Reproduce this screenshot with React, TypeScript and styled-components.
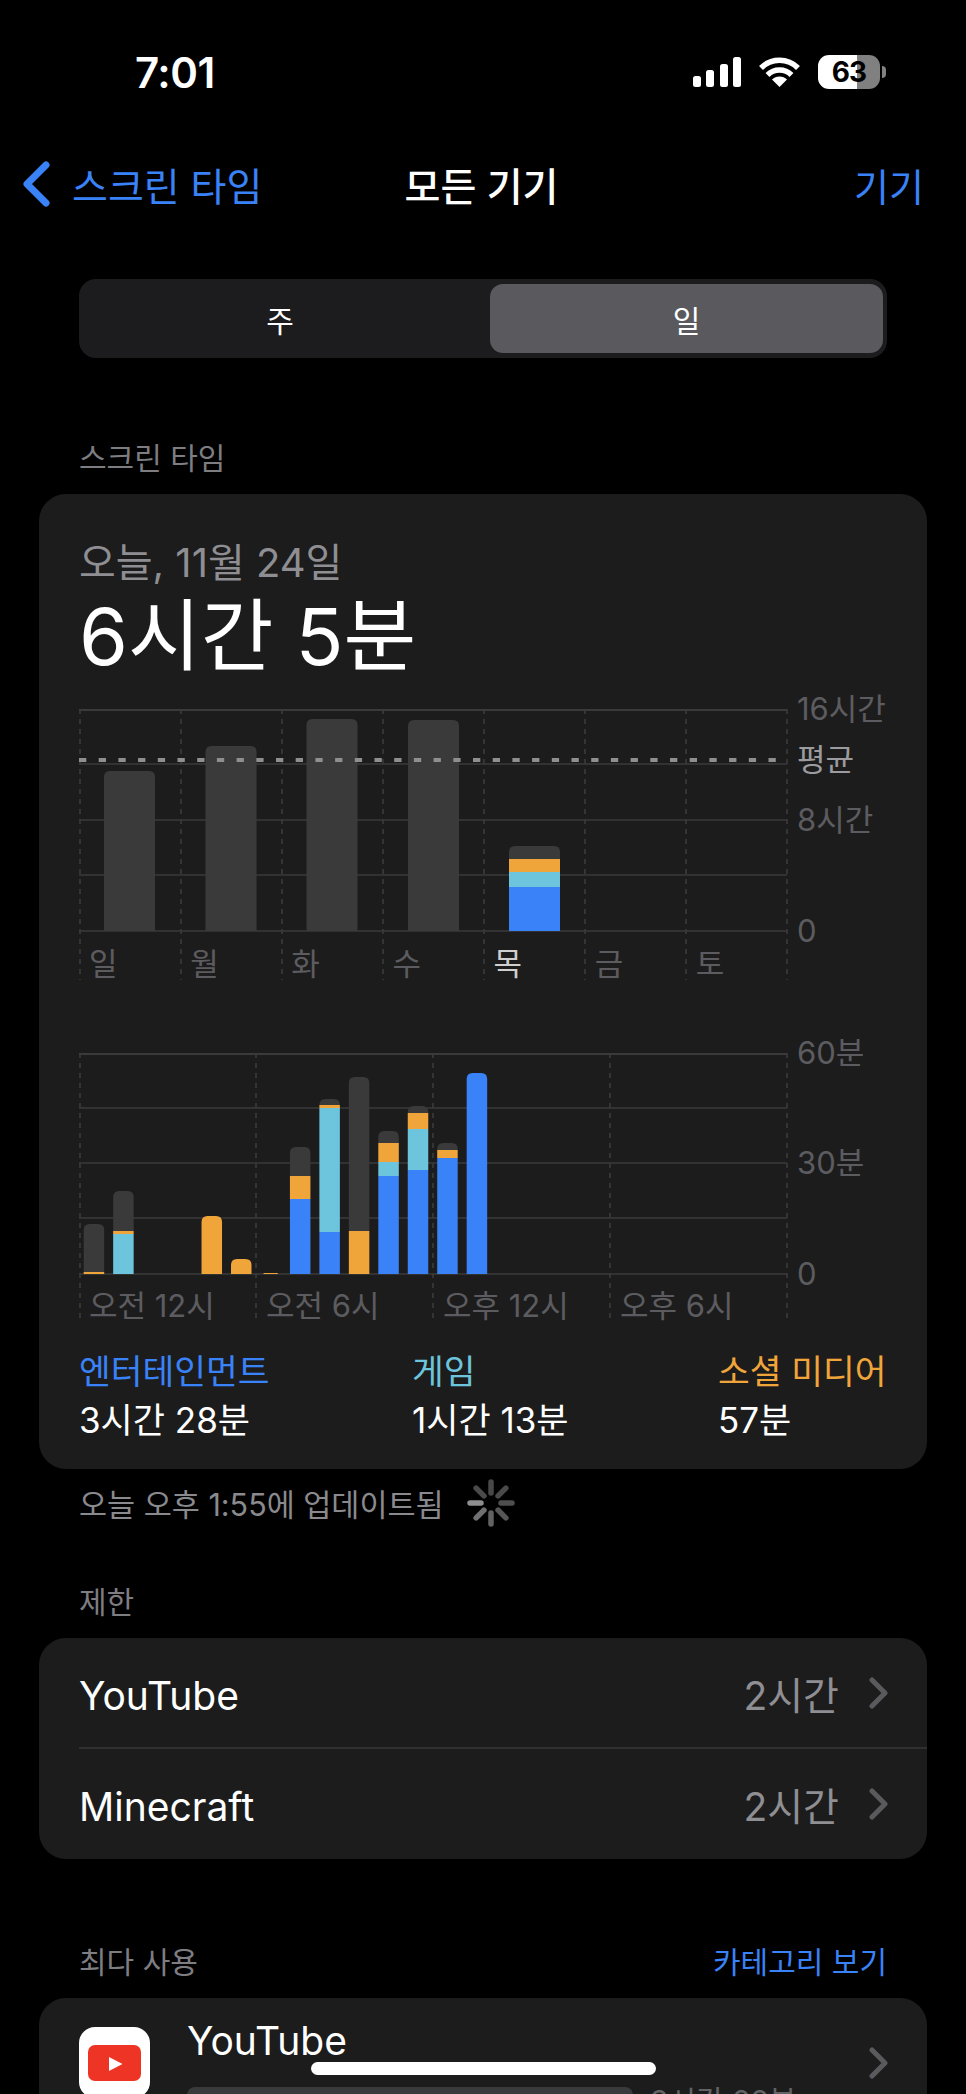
import React from "react";
import styled, { createGlobalStyle } from "styled-components";

const GlobalStyle = createGlobalStyle`
  html, body { margin: 0; padding: 0; background: #000; }
  body { width: 966px; height: 2094px; overflow: hidden; font-family: Inter, "Noto Sans CJK KR", sans-serif; color: #fff; }
  * { box-sizing: border-box; }
`;

const BLUE = "#3a82f7";
const CYAN = "#6cc5dd";
const ORANGE = "#f0a53b";
const GRAY = "#3a3a3a";

const Phone = styled.div`
  position: relative;
  width: 966px;
  height: 2094px;
  overflow: hidden;
  background: #000;
`;

const StatusBar = styled.div`
  height: 112px;
  padding: 32px 80px 0 135px;
  display: flex;
  align-items: center;
  justify-content: space-between;
`;
const Time = styled.div`
  font-size: 42px;
  font-weight: 600;
  letter-spacing: -0.5px;
`;
const StatusIcons = styled.div`
  display: flex;
  align-items: center;
  gap: 18px;
`;
const Signal = styled.div`
  display: flex;
  align-items: flex-end;
  gap: 5.3px;
  height: 30px;
`;
const SignalBar = styled.i<{ $h: number }>`
  display: block;
  width: 8px;
  height: ${(p) => p.$h}px;
  border-radius: 2.5px;
  background: #fff;
`;
const Battery = styled.div`
  position: relative;
  width: 62px;
  height: 34px;
  border-radius: 11px;
  background: linear-gradient(90deg, #fff 0 39px, #808080 39px);
  color: #000;
  font: 700 28px/34px Inter, sans-serif;
  letter-spacing: -1px;
  text-align: center;
  margin-right: 6px;
  &::after {
    content: "";
    position: absolute;
    right: -6px;
    top: 11px;
    width: 4px;
    height: 12px;
    border-radius: 0 5px 5px 0;
    background: #808080;
  }
`;

const Nav = styled.div`
  height: 144px;
  padding: 0 42px 0 23px;
  display: grid;
  grid-template-columns: 1fr auto 1fr;
  align-items: center;
`;
const BackLink = styled.div`
  display: flex;
  align-items: center;
  gap: 22px;
  color: ${BLUE};
  font-size: 39px;
`;
const NavTitle = styled.div`
  font-size: 39px;
  font-weight: 500;
  margin-left: 16px;
`;
const NavAction = styled.div`
  justify-self: end;
  font-size: 38px;
  color: ${BLUE};
`;

const Segmented = styled.div`
  margin: 23px 79px 0;
  height: 79px;
  padding: 5px 4px 5px 5px;
  border-radius: 17px;
  background: #1c1c1e;
  display: grid;
  grid-template-columns: 392px 1fr;
  gap: 14px;
`;
const Segment = styled.div<{ $on?: boolean }>`
  display: flex;
  align-items: center;
  justify-content: center;
  border-radius: 13px;
  font-size: 30px;
  background: ${(p) => (p.$on ? "#5a5a5e" : "transparent")};
`;

const SectionHead = styled.div<{ $top: number }>`
  margin: ${(p) => p.$top}px 79px 0;
  height: 44px;
  display: flex;
  align-items: center;
  justify-content: space-between;
  font-size: 30px;
  color: #7d7d82;
`;
const SectionLink = styled.span`
  color: ${BLUE};
`;

const Card = styled.section`
  margin: 16px 39px 0;
  border-radius: 27px;
  background: #1c1c1c;
`;
const ScreenCard = styled(Card)`
  height: 975px;
  padding: 44px 40px 0;
`;
const DateLine = styled.div`
  font-size: 40px;
  line-height: 50px;
  color: #8e8e93;
`;
const Total = styled.div`
  font-size: 79px;
  line-height: 100px;
  margin-top: -2px;
`;

const Chart = styled.div<{ $h: number; $top: number }>`
  position: relative;
  width: 808px;
  height: ${(p) => p.$h}px;
  margin-top: ${(p) => p.$top}px;
  & > svg {
    display: block;
  }
`;
const AxisLabel = styled.span<{ $y: number; $bright?: boolean }>`
  position: absolute;
  left: 718px;
  top: ${(p) => p.$y - 20}px;
  line-height: 40px;
  font-size: 31px;
  color: ${(p) => (p.$bright ? "#9c9ca0" : "#5c5c60")};
`;
const XLabels = styled.div<{ $cols: number }>`
  position: absolute;
  left: 0;
  bottom: 0;
  width: 708px;
  display: grid;
  grid-template-columns: repeat(${(p) => p.$cols}, 1fr);
`;
const XLabel = styled.span<{ $on?: boolean }>`
  padding-left: 10px;
  line-height: 32px;
  font-size: 31px;
  white-space: nowrap;
  color: ${(p) => (p.$on ? "#cfcfcf" : "#5c5c60")};
`;

const Legend = styled.div`
  margin-top: 26px;
  display: grid;
  grid-template-columns: 333px 306px 1fr;
  white-space: nowrap;
`;
const LegendName = styled.div<{ $c: string }>`
  font-size: 34.5px;
  line-height: 48px;
  color: ${(p) => p.$c};
`;
const LegendValue = styled.div`
  font-size: 35px;
  line-height: 48px;
`;

const Updated = styled.div`
  margin: 0 79px;
  height: 68px;
  display: flex;
  align-items: center;
  gap: 22px;
  font-size: 30.5px;
  color: #8a8a8e;
`;

const Row = styled.div`
  height: 109px;
  margin-left: 40px;
  padding-right: 39px;
  display: flex;
  align-items: center;
  justify-content: space-between;
  font-size: 39px;
  & + & {
    height: 112px;
    border-top: 2px solid #303032;
  }
`;
const RowLabel = styled.span`
  padding-top: 5px;
`;
const RowRight = styled.div`
  display: flex;
  align-items: center;
  gap: 30px;
  color: #8e8e93;
`;

const AppRow = styled.div`
  position: relative;
  height: 130px;
  padding: 29px 39px 0 40px;
  display: flex;
  gap: 37px;
`;
const AppIcon = styled.div`
  flex: none;
  width: 71px;
  height: 71px;
  border-radius: 16px;
  background: #fff;
  display: flex;
  align-items: center;
  justify-content: center;
`;
const AppBody = styled.div`
  flex: 1;
  font-size: 39px;
  line-height: 44px;
  margin-top: -8px;
`;
const AppMeter = styled.div`
  display: flex;
  align-items: flex-start;
  gap: 17px;
  margin-top: 18px;
  font-size: 30px;
  line-height: 40px;
  color: #636366;
`;
const MeterBar = styled.div`
  width: 446px;
  height: 30px;
  margin-top: 6px;
  border-radius: 8px;
  background: #3a3a3c;
`;
const AppChevron = styled.div`
  position: absolute;
  right: 39px;
  top: 49px;
`;

const HomeIndicator = styled.div`
  position: absolute;
  left: 311px;
  top: 2062px;
  width: 345px;
  height: 13px;
  border-radius: 7px;
  background: #fff;
`;

type Seg = [number, string];
type Bar = { x: number; w: number; segs: Seg[] };

function topPath(x: number, y: number, w: number, b: number, r: number) {
  const rr = Math.min(r, b - y);
  return `M${x} ${b}V${y + rr}Q${x} ${y} ${x + rr} ${y}H${x + w - rr}Q${x + w} ${y} ${x + w} ${y + rr}V${b}Z`;
}

function ChartPlot({
  height,
  hLines,
  vLines,
  bars,
  base,
  avg,
}: {
  height: number;
  hLines: number[];
  vLines: number[];
  bars: Bar[];
  base: number;
  avg?: number;
}) {
  return (
    <svg width={710} height={height} viewBox={`0 0 710 ${height}`}>
      {vLines.map((x) => (
        <line key={x} x1={x} x2={x} y1={0} y2={height} stroke="#3c3c3e" strokeWidth={1.5} strokeDasharray="5 5" />
      ))}
      {hLines.map((y, i) => (
        <line key={y} x1={0} x2={708} y1={y} y2={y} stroke="#3a3a3a" strokeWidth={i === 0 ? 2 : 1.5} />
      ))}
      {bars.map((b) => (
        <g key={b.x}>
          {b.segs.map(([top, c], i) => {
            const bottom = i + 1 < b.segs.length ? b.segs[i + 1][0] : base;
            return i === 0 ? (
              <path key={i} d={topPath(b.x, top, b.w, bottom, 6)} fill={c} />
            ) : (
              <rect key={i} x={b.x} y={top} width={b.w} height={bottom - top} fill={c} />
            );
          })}
        </g>
      ))}
      {avg !== undefined && (
        <line x1={0} x2={708} y1={avg} y2={avg} stroke="#8f8f92" strokeWidth={4} strokeDasharray="7.3 12.4" />
      )}
    </svg>
  );
}

const O1 = 709;
const weekBars: Bar[] = [
  { x: 25, w: 51, segs: [[771 - O1, GRAY]] },
  { x: 126.5, w: 51, segs: [[746 - O1, GRAY]] },
  { x: 227.5, w: 51, segs: [[719 - O1, GRAY]] },
  { x: 329, w: 51, segs: [[720 - O1, GRAY]] },
  {
    x: 430,
    w: 51,
    segs: [
      [846 - O1, GRAY],
      [859 - O1, ORANGE],
      [872 - O1, CYAN],
      [887 - O1, BLUE],
    ],
  },
];

const O2 = 1053;
const hourSegs: [number, [number, string][]][] = [
  [0, [[1224, GRAY], [1272, ORANGE]]],
  [1, [[1191, GRAY], [1231, ORANGE], [1234, CYAN]]],
  [4, [[1216, ORANGE]]],
  [5, [[1259, ORANGE]]],
  [7, [[1147, GRAY], [1176, ORANGE], [1199, BLUE]]],
  [8, [[1099, GRAY], [1105, ORANGE], [1108, CYAN], [1232, BLUE]]],
  [9, [[1077, GRAY], [1231, ORANGE]]],
  [10, [[1131, GRAY], [1143, ORANGE], [1162, CYAN], [1176, BLUE]]],
  [11, [[1106, GRAY], [1113, ORANGE], [1129, CYAN], [1170, BLUE]]],
  [12, [[1143, GRAY], [1150, ORANGE], [1158, BLUE]]],
  [13, [[1073, BLUE]]],
];
const hourBars: Bar[] = [
  ...hourSegs.map(([i, segs]) => ({
    x: 4.7 + i * 29.46,
    w: 20.5,
    segs: segs.map(([t, c]) => [t - O2, c] as Seg),
  })),
  { x: 184.3, w: 14.7, segs: [[1273 - O2, ORANGE]] },
];

const Chevron = ({ color = "#5a5a5e" }: { color?: string }) => (
  <svg width="19" height="32" viewBox="0 0 19 32" fill="none">
    <path d="M3 3 L16 16 L3 29" stroke={color} strokeWidth="5" strokeLinecap="round" strokeLinejoin="round" />
  </svg>
);

const Wifi = () => (
  <svg width="41" height="30" viewBox="0 0 41 30" fill="none">
    <path d="M2 11 A26 26 0 0 1 39 11" stroke="#fff" strokeWidth="5.5" />
    <path d="M8.5 18 A17 17 0 0 1 32.5 18" stroke="#fff" strokeWidth="5.5" />
    <path d="M20.5 30 L13 22.6 A10.5 10.5 0 0 1 28 22.6 Z" fill="#fff" />
  </svg>
);

const spinnerColors = ["#4a4a4c", "#484848", "#4a4a4a", "#4e4e4e", "#565656", "#626262", "#707072", "#8e8e90"];
const Spinner = () => (
  <svg width="50" height="50" viewBox="0 0 50 50">
    {spinnerColors.map((c, i) => (
      <line
        key={i}
        x1="25"
        y1="4"
        x2="25"
        y2="15"
        stroke={c}
        strokeWidth="5.5"
        strokeLinecap="round"
        transform={`rotate(${i * 45 - 45} 25 25)`}
      />
    ))}
  </svg>
);

const days = ["일", "월", "화", "수", "목", "금", "토"];
const hours = ["오전 12시", "오전 6시", "오후 12시", "오후 6시"];

export default function App() {
  return (
    <Phone>
      <GlobalStyle />
      <StatusBar>
        <Time>7:01</Time>
        <StatusIcons>
          <Signal>
            {[11, 17, 23, 30].map((h) => (
              <SignalBar key={h} $h={h} />
            ))}
          </Signal>
          <Wifi />
          <Battery>63</Battery>
        </StatusIcons>
      </StatusBar>
      <Nav>
        <BackLink>
          <svg width="27" height="46" viewBox="0 0 27 46" fill="none">
            <path d="M23 4 L4 23 L23 42" stroke={BLUE} strokeWidth="7" strokeLinecap="round" strokeLinejoin="round" />
          </svg>
          스크린 타임
        </BackLink>
        <NavTitle>모든 기기</NavTitle>
        <NavAction>기기</NavAction>
      </Nav>
      <Segmented>
        <Segment>주</Segment>
        <Segment $on>일</Segment>
      </Segmented>
      <SectionHead $top={76}>스크린 타임</SectionHead>
      <ScreenCard>
        <DateLine>오늘, 11월 24일</DateLine>
        <Total>6시간 5분</Total>
        <Chart $h={271} $top={23}>
          <ChartPlot
            height={271}
            hLines={[1, 55, 111, 166, 222]}
            vLines={[1, 102, 203, 304, 405, 506, 607, 708]}
            bars={weekBars}
            base={222}
            avg={51}
          />
          <AxisLabel $y={0}>16시간</AxisLabel>
          <AxisLabel $y={51} $bright>
            평균
          </AxisLabel>
          <AxisLabel $y={111}>8시간</AxisLabel>
          <AxisLabel $y={222}>0</AxisLabel>
          <XLabels $cols={7}>
            {days.map((d) => (
              <XLabel key={d} $on={d === "목"}>
                {d}
              </XLabel>
            ))}
          </XLabels>
        </Chart>
        <Chart $h={269} $top={73}>
          <ChartPlot
            height={269}
            hLines={[1, 55, 110, 165, 221]}
            vLines={[1, 177, 354, 531, 708]}
            bars={hourBars}
            base={221}
          />
          <AxisLabel $y={0}>60분</AxisLabel>
          <AxisLabel $y={110}>30분</AxisLabel>
          <AxisLabel $y={221}>0</AxisLabel>
          <XLabels $cols={4}>
            {hours.map((h) => (
              <XLabel key={h}>{h}</XLabel>
            ))}
          </XLabels>
        </Chart>
        <Legend>
          <div>
            <LegendName $c={BLUE}>엔터테인먼트</LegendName>
            <LegendValue>3시간 28분</LegendValue>
          </div>
          <div>
            <LegendName $c={CYAN}>게임</LegendName>
            <LegendValue>1시간 13분</LegendValue>
          </div>
          <div>
            <LegendName $c={ORANGE}>소셜 미디어</LegendName>
            <LegendValue>57분</LegendValue>
          </div>
        </Legend>
      </ScreenCard>
      <Updated>
        오늘 오후 1:55에 업데이트됨
        <Spinner />
      </Updated>
      <SectionHead $top={41}>제한</SectionHead>
      <Card>
        <Row>
          <RowLabel>YouTube</RowLabel>
          <RowRight>
            2시간
            <Chevron />
          </RowRight>
        </Row>
        <Row>
          <RowLabel>Minecraft</RowLabel>
          <RowRight>
            2시간
            <Chevron />
          </RowRight>
        </Row>
      </Card>
      <SectionHead $top={79}>
        최다 사용
        <SectionLink>카테고리 보기</SectionLink>
      </SectionHead>
      <Card>
        <AppRow>
          <AppIcon>
            <svg width="53" height="36" viewBox="0 0 53 36">
              <rect width="53" height="36" rx="7" fill="#ee3424" />
              <path d="M21 12 L34.5 19 L21 26 Z" fill="#fff" />
            </svg>
          </AppIcon>
          <AppBody>
            YouTube
            <AppMeter>
              <MeterBar />
              3시간 28분
            </AppMeter>
          </AppBody>
          <AppChevron>
            <Chevron />
          </AppChevron>
        </AppRow>
      </Card>
      <HomeIndicator />
    </Phone>
  );
}
